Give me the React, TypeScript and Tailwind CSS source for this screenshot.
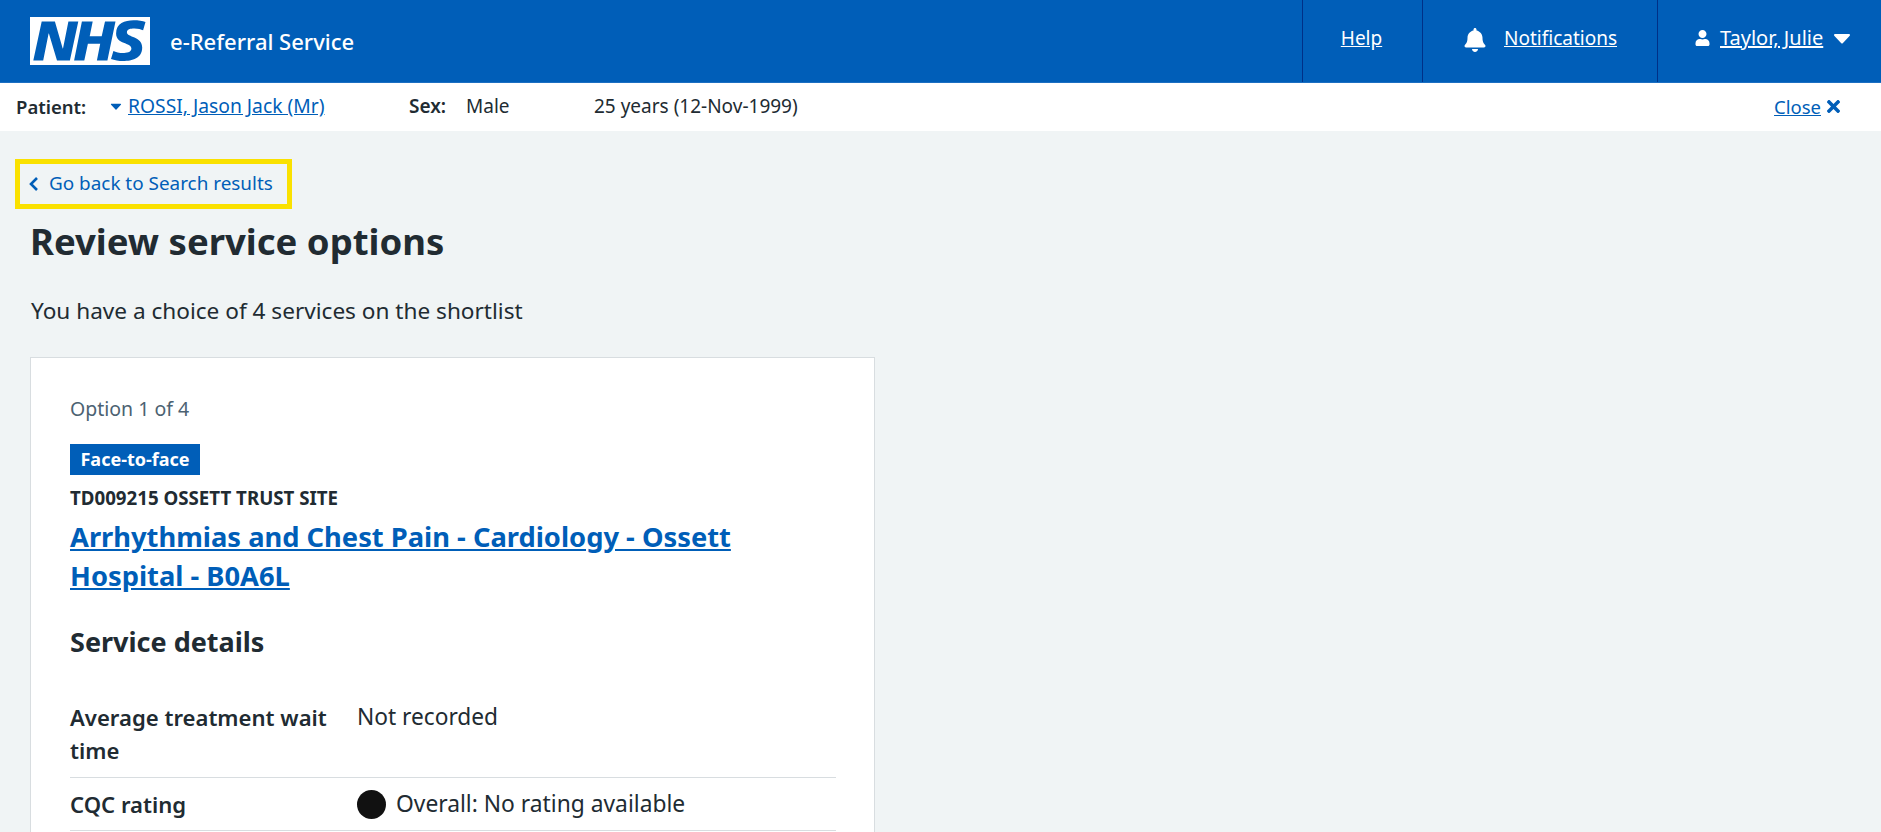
import { FaBell, FaUser, FaTimes } from "react-icons/fa";

const font = "[font-family:'Noto_Sans','Open_Sans',sans-serif]";

function Caret({ className }: { className: string }) {
  return (
    <svg viewBox="0 0 18 11" className={className} fill="currentColor" stroke="currentColor" strokeWidth="2" strokeLinejoin="round">
      <path d="M2 2h14L9 9.5z" />
    </svg>
  );
}

export default function App() {
  return (
    <div className={`h-[832px] overflow-hidden bg-[#f0f4f5] text-[#212b32] ${font}`}>
      <header className="flex h-[83px] items-stretch border-b border-[#1c6fc2] bg-[#005eb8] text-white">
        <div className="flex flex-1 items-center pl-[30px]">
          <svg viewBox="0 0 40 16" className="h-[48px] w-[120px]">
            <path fill="#fff" d="M0 0h40v16H0z" />
            <path
              fill="#005eb8"
              d="M3.9 1.5h4.4l2.6 9h.1l1.8-9h3.3l-2.8 13H9l-2.7-9h-.1l-1.8 9H1.1M17.3 1.5h3.6l-1 4.9h4L25 1.5h3.5l-2.7 13h-3.5l1.1-5.6h-4.1l-1.2 5.6h-3.4M37.7 4.4c-.7-.3-1.6-.6-2.9-.6-1.4 0-2.5.2-2.5 1.3 0 1.8 5.1 1.2 5.1 5.1 0 3.6-3.3 4.5-6.4 4.5-1.3 0-2.9-.3-4-.7l.8-2.7c.7.4 2.1.7 3.2.7s2.8-.2 2.8-1.5c0-2.1-5.1-1.3-5.1-5 0-3.4 2.9-4.4 5.8-4.4 1.6 0 3.1.2 4 .6"
            />
          </svg>
          <span className="ml-[20px] text-[22px] font-medium">e-Referral Service</span>
        </div>
        <nav className="flex text-[19px] leading-[28px]">
          <div className="flex w-[120px] justify-center border-l border-[#003087] pr-[2px] pt-[24px]">
            <a className="underline">Help</a>
          </div>
          <div className="flex w-[235px] gap-[18px] border-l border-[#003087] pl-[41px] pt-[24px]">
            <FaBell className="mt-[4px] h-[24px] w-[22px]" />
            <a className="underline">Notifications</a>
          </div>
          <div className="flex w-[224px] border-l border-[#003087] pl-[37px] pt-[24px]">
            <FaUser className="mt-[6px] h-[16px] w-[15px]" />
            <a className="ml-[10px] text-[20px] underline">Taylor, Julie</a>
            <Caret className="ml-[10px] mt-[9px] h-[11px] w-[18px]" />
          </div>
        </nav>
      </header>

      <div className="flex h-[48px] items-center bg-white pb-[1px] pl-[16px] pr-[38px] text-[19px]">
        <span className="w-[94px] text-[18.5px] font-semibold">Patient:</span>
        <Caret className="h-[7px] w-[12px] text-[#005eb8]" />
        <a className="ml-[6px] w-[281px] text-[19.3px] text-[#005eb8] underline">ROSSI, Jason Jack (Mr)</a>
        <span className="w-[57px] font-semibold">Sex:</span>
        <span className="w-[128px]">Male</span>
        <span>25 years (12-Nov-1999)</span>
        <span className="flex-1" />
        <a className="text-[18.5px] text-[#005eb8] underline">Close</a>
        <FaTimes className="ml-[3px] h-[19px] w-[19px] text-[#005eb8]" />
      </div>

      <main className="px-[15px] pt-[28px]">
        <div className="flex h-[50px] w-[277px] items-center gap-[10px] border-[5px] border-[#fae100] pb-[1px] pl-[9px] text-[18.9px] text-[#005eb8]">
          <svg viewBox="0 0 10 16" className="h-[16px] w-[10px]" fill="none" stroke="currentColor" strokeWidth="2.6">
            <path d="M8 2 2 8l6 6" />
          </svg>
          <a>Go back to Search results</a>
        </div>

        <div className="pl-[15px]">
          <h1 className="mt-[7px] text-[36.5px] font-bold leading-[50px]">Review service options</h1>
          <p className="mt-[29px] pl-[1px] text-[22.6px] leading-[32px]">You have a choice of 4 services on the shortlist</p>

          <section className="mt-[30px] h-[600px] w-[845px] border border-[#d8dde0] bg-white pl-[39px] pr-[38px] pt-[37px]">
            <p className="text-[19.5px] leading-[28px] text-[#4c6272]">Option 1 of 4</p>
            <span className="mt-[21px] block w-[130px] bg-[#005eb8] py-[3px] text-center text-[18px] font-bold leading-[25px] text-white">
              Face-to-face
            </span>
            <p className="mt-[11px] text-[18.7px] font-bold leading-[24px]">TD009215 OSSETT TRUST SITE</p>
            <h2 className="mt-[7px] text-[27.3px] font-bold leading-[39px] text-[#005eb8] underline">
              Arrhythmias and Chest Pain - Cardiology - Ossett Hospital - B0A6L
            </h2>
            <h3 className="mt-[27px] text-[27px] font-bold leading-[40px]">Service details</h3>
            <div className="mt-[39px] flex border-b border-[#d8dde0] pb-[11px] text-[22.7px] leading-[32.5px]">
              <span className="w-[287px] pr-[20px] text-[22.1px] font-semibold">Average treatment wait time</span>
              <span>Not recorded</span>
            </div>
            <div className="flex items-center border-b border-[#d8dde0] py-[11px] text-[22.8px] leading-[30px]">
              <span className="w-[287px] text-[22.1px] font-semibold">CQC rating</span>
              <span className="mr-[10px] h-[29px] w-[29px] rounded-full bg-[#111]" />
              <span>Overall: No rating available</span>
            </div>
          </section>
        </div>
      </main>
    </div>
  );
}
